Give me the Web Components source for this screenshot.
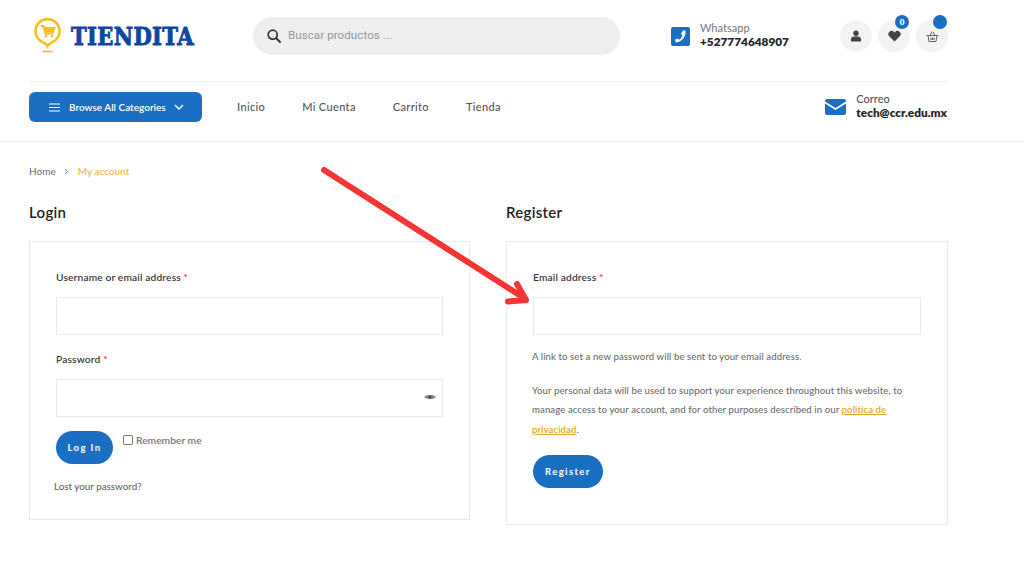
<!DOCTYPE html>
<html lang="es"><head><meta charset="utf-8"><title>Tiendita</title>
<style>
html,body{margin:0;background:#fff}
body{font-family:"Lato","Noto Sans",sans-serif;color:#333;width:1024px;height:576px;overflow:hidden;position:relative}
</style></head><body>
<site-header></site-header>
<account-page></account-page>
<red-arrow></red-arrow>
<script>
function def(name,html){customElements.define(name,class extends HTMLElement{constructor(){super();this.attachShadow({mode:'open'}).innerHTML=html;}});}
def('round-icon',`<style>:host{display:flex;width:32px;height:32px;border-radius:50%;background:#f3f3f3;align-items:center;justify-content:center;position:relative}</style><slot></slot><slot name="badge"></slot>`);
def('site-logo',`<style>:host{display:flex;align-items:center;width:224px;padding-left:5px;box-sizing:border-box;gap:10px}
b{font:700 24px/1 "DejaVu Serif",serif;color:#0d47a1;transform:translateY(1px) scaleX(.88);transform-origin:left;white-space:nowrap;-webkit-text-stroke:.9px #0d47a1;letter-spacing:.4px}
svg{display:block;margin-top:-1px}</style>
<svg width="27" height="36" viewBox="0 0 27 36"><path d="M13.5 28 C12 25 9 24.500 6 22.500 A12 12 0 1 1 21 22.500 C18 24.500 15 25 13.500 28Z" fill="#fff" stroke="#f9bd1d" stroke-width="2.600"/><ellipse cx="13.500" cy="33.500" rx="5.500" ry="1.100" fill="#f9bd1d"/><path d="M7 8h2.500l2 7.500h7l1.800-5.500H10" fill="none" stroke="#f9bd1d" stroke-width="2"/><path d="M10.500 10h9.500l-1.300 4.500h-7z" fill="#f9bd1d"/><circle cx="12" cy="18" r="1.300" fill="#f9bd1d"/><circle cx="18" cy="18" r="1.300" fill="#f9bd1d"/></svg><b>TIENDITA</b>`);
def('search-bar',`<style>:host{display:flex;align-items:center;width:367px;height:38px;border-radius:19px;background:#eee;box-sizing:border-box;padding-left:14px;gap:7px;color:#969696;font:400 11.500px/1 "Roboto",sans-serif;letter-spacing:.1px}</style>
<svg width="14" height="14" viewBox="0 0 14 14"><circle cx="5.700" cy="5.700" r="4.500" fill="none" stroke="#333" stroke-width="1.700"/><path d="M9 9l4 4" stroke="#333" stroke-width="2" stroke-linecap="round"/></svg><span>Buscar productos ...</span>`);
def('contact-item',`<style>:host{display:flex;align-items:center;gap:10px;letter-spacing:0}
.t{display:flex;flex-direction:column;margin-top:-2px;font:500 11px/14px "Lato",sans-serif;color:var(--c,#808080)}
::slotted([slot=v]){font:800 11.800px/14px "Lato",sans-serif;color:#262626}</style>
<slot name="i"></slot><div class="t"><slot></slot><slot name="v"></slot></div>`);
def('main-nav',`<style>:host{display:flex;align-items:center;box-sizing:border-box;height:59px;padding-bottom:9px;font:500 11px/1 "Lato",sans-serif;color:#555;letter-spacing:.35px}
.btn{display:flex;align-items:center;box-sizing:border-box;width:173px;height:30px;border-radius:6px;background:#1b6fc2;color:#fff;padding-left:20px;font-size:10px;font-weight:600;margin-right:35px;white-space:nowrap;letter-spacing:0}
.btn svg:first-child{margin-right:9px}.btn svg:last-child{margin-left:8px}
.l{display:flex;gap:37px;margin-bottom:2px}.l span{white-space:nowrap}.sp{flex:1}</style>
<div class="btn"><svg width="11" height="9" viewBox="0 0 11 9"><path d="M0 1h11M0 4.500h11M0 8h11" stroke="#fff" stroke-width="1.200"/></svg><span>Browse All Categories</span><svg width="10" height="6" viewBox="0 0 10 6"><path d="M1 1l4 4 4-4" fill="none" stroke="#fff" stroke-width="1.400"/></svg></div>
<div class="l"><span>Inicio</span><span>Mi Cuenta</span><span>Carrito</span><span>Tienda</span></div><div class="sp"></div><slot></slot>`);
def('site-header',`<style>:host{display:block;border-bottom:1px solid #eee}
.w{margin:0 77px 0 29px}.top{display:flex;align-items:center;height:72px;padding-bottom:9px;border-bottom:1px solid #eee;margin-right:-1px}
contact-item.p{margin-left:51px;width:169px}.ic{display:flex;gap:6px}
.bd{position:absolute;top:-5px;right:1px;width:14px;height:14px;border-radius:50%;background:#1b6fc2;color:#fff;font:800 8px/14px Lato,sans-serif;text-align:center}
</style><div class="w"><div class="top"><site-logo></site-logo><search-bar></search-bar>
<contact-item class="p"><svg slot="i" width="19" height="19" viewBox="0 0 19 19"><rect width="19" height="19" rx="2" fill="#1b6fc2"/><path d="M12 3.500l2.500 0c.8 6-3.500 11.500-9.800 12l-.7-3 3-1 1.100 1.300c1.800-1 3-3 3.300-4.800L9.800 7z" fill="#fff"/></svg>Whatsapp<span slot="v">+527774648907</span></contact-item>
<div class="ic"><round-icon><svg width="12" height="12" viewBox="0 0 12 12"><circle cx="6" cy="3.200" r="2.700" fill="#444"/><path d="M1 11.500V9c0-1.800 2-2.800 5-2.800s5 1 5 2.800v2.500z" fill="#444"/></svg></round-icon>
<round-icon><svg width="13" height="12" viewBox="0 0 13 12"><path d="M6.500 11.500L1.200 6.200A3.200 3.200 0 0 1 6 1.900l.5.600.5-.6a3.200 3.200 0 0 1 4.800 4.300z" fill="#444"/></svg><span slot="badge" class="bd">0</span></round-icon>
<round-icon><svg width="13" height="11" viewBox="0 0 13 11"><path d="M.5 4.500h12M2 4.500l1 6h7l1-6M4 4.500L6 .8M9 4.500L7 .8M5 6.500v2.500M6.500 6.500v2.500M8 6.500v2.500" fill="none" stroke="#555" stroke-width=".9"/></svg><span slot="badge" class="bd"></span></round-icon></div></div>
<main-nav><contact-item><svg slot="i" width="21" height="16" viewBox="0 0 21 16"><path d="M2 0h17a2 2 0 0 1 2 2v.5l-10.500 6.500L0 2.500V2a2 2 0 0 1 2-2z" fill="#1b6fc2"/><path d="M0 4.500l10.500 6.500L21 4.500V14a2 2 0 0 1-2 2H2a2 2 0 0 1-2-2z" fill="#1b6fc2"/></svg><span style="color:#555">Correo</span><span slot="v">tech@ccr.edu.mx</span></contact-item></main-nav></div>`);
def('form-field',`<style>:host{display:block;margin-bottom:17px}
label{display:block;font:600 10.200px/14px "Lato",sans-serif;color:#3a3a3a;margin-bottom:13px;letter-spacing:.15px}i{color:#d33;font-style:normal}
.in{height:36px;border:1px solid #e9e9e9;position:relative}</style><label><slot></slot> <i>*</i></label><div class="in"><slot name="e"></slot></div>`);
def('pill-button',`<style>:host{display:inline-flex;align-items:center;justify-content:center;height:33px;padding:0 var(--p,11px);border-radius:17px;background:#1b6fc2;color:#fff;font:700 9.500px/1 "Lato",sans-serif;letter-spacing:1.400px}</style><slot></slot>`);
def('form-card',`<style>:host{display:block}h2{margin:0 0 19px;font:600 15px/19px "Lato",sans-serif;color:#222;letter-spacing:.3px}
.c{border:1px solid #e9e9e9;padding:28px 26px 0;height:var(--h);box-sizing:border-box}</style><h2><slot name="t"></slot></h2><div class="c"><slot></slot></div>`);
def('account-page',`<style>:host{display:block;margin:0 76px 0 29px}
.bc{display:flex;align-items:center;gap:8.500px;height:14px;margin:22px 0 25px;font:500 10px/14px "Lato",sans-serif;color:#777}.bc em{font-style:normal;color:#eeb54a}
.g{display:grid;grid-template-columns:441px 442px;justify-content:space-between}
.row{display:flex;gap:10px;align-items:flex-start;margin-top:4px}
.rm{display:flex;align-items:center;gap:2px;font:600 10.300px/14px "Lato",sans-serif;color:#777;margin-top:2px}
.bx{display:inline-block;width:8px;height:8px;border:1px solid #777;border-radius:2px;margin-right:1px}
.lost{font:500 9.800px/14px "Lato",sans-serif;color:#666;margin:15px 0 0 -2px}
p{margin:0;font:500 9.600px/19.500px "Lato",sans-serif;color:#6d6d6d;letter-spacing:.08px}
p a{color:#e6a628;text-decoration:underline;font-weight:600}
.r1{margin:0 0 14px -1px}.r2{margin:0 0 16px -1px}
form-field.f2{margin-bottom:14px}</style>
<nav class="bc"><span>Home</span><svg width="5" height="7" viewBox="0 0 5 7"><path d="M1 1l2.500 2.500L1 6" fill="none" stroke="#777"/></svg><em>My account</em></nav>
<div class="g"><form-card style="--h:279px"><span slot="t">Login</span><form-field>Username or email address</form-field>
<form-field class="f2">Password<svg slot="e" style="position:absolute;right:6px;top:14px" width="12" height="6" viewBox="0 0 12 6"><path d="M0 3C3 0 9 0 12 3 9 6 3 6 0 3z" fill="#888"/><circle cx="6" cy="3" r="1.500" fill="#444"/></svg></form-field>
<div class="row"><pill-button style="--p:11.500px">Log In</pill-button><div class="rm"><span class="bx"></span>Remember me</div></div>
<div class="lost">Lost your password?</div></form-card>
<form-card style="--h:284px"><span slot="t">Register</span><form-field style="margin-bottom:12px">Email address</form-field>
<p class="r1">A link to set a new password will be sent to your email address.</p>
<p class="r2">Your personal data will be used to support your experience throughout this website, to manage access to your account, and for other purposes described in our <a>politica de privacidad</a>.</p>
<pill-button style="--p:12px">Register</pill-button></form-card></div>`);
def('red-arrow',`<style>:host{display:block;position:absolute;left:0;top:0;width:1024px;height:576px;pointer-events:none}svg{display:block}</style>
<svg width="1024" height="576"><path d="M324 170L524 298" stroke="#f53434" stroke-width="6" stroke-linecap="round"/><path d="M508 301.500L526 300 517 284" fill="none" stroke="#f53434" stroke-width="6" stroke-linecap="round" stroke-linejoin="round"/></svg>`);
</script></body></html>
